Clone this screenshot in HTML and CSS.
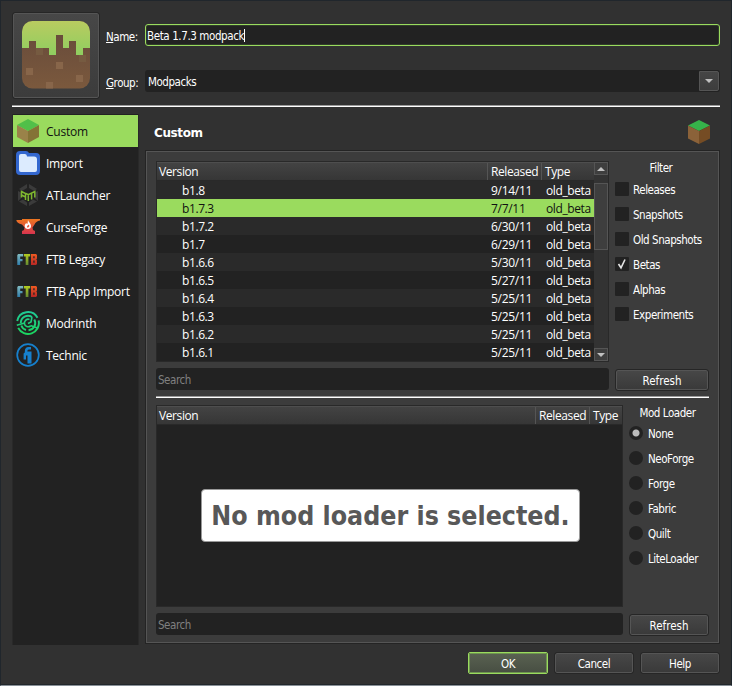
FILE: index.html
```html
<!DOCTYPE html>
<html lang="en">
<head>
<meta charset="utf-8">
<title>New Instance</title>
<link rel="stylesheet" href="styles.css">
</head>
<body>
<svg class="defs" width="0" height="0">
  <defs>
    <linearGradient id="ftbF" gradientUnits="userSpaceOnUse" x1="0" y1="7" x2="0" y2="18"><stop offset="0" stop-color="#83bbc0"/><stop offset="1" stop-color="#2f7eac"/></linearGradient>
    <linearGradient id="ftbT" gradientUnits="userSpaceOnUse" x1="0" y1="7" x2="0" y2="18"><stop offset="0" stop-color="#b3cc20"/><stop offset="1" stop-color="#658931"/></linearGradient>
    <linearGradient id="ftbB" gradientUnits="userSpaceOnUse" x1="0" y1="7" x2="0" y2="18"><stop offset="0" stop-color="#f05a22"/><stop offset="1" stop-color="#b82725"/></linearGradient>
    <linearGradient id="curse" x1="0" y1="0" x2="0" y2="1"><stop offset="0" stop-color="#ed7620"/><stop offset="1" stop-color="#d7344f"/></linearGradient>
    <linearGradient id="modr" gradientUnits="userSpaceOnUse" x1="0" y1="0" x2="0" y2="24"><stop offset="0" stop-color="#20c997"/><stop offset="1" stop-color="#1bd65d"/></linearGradient>
    <linearGradient id="grass" x1="0" y1="0" x2="0" y2="1"><stop offset="0" stop-color="#b9cb60"/><stop offset="1" stop-color="#8fce60"/></linearGradient>
    <linearGradient id="dirt" x1="0" y1="0" x2="0" y2="1"><stop offset=".2" stop-color="#694c3b"/><stop offset="1" stop-color="#7b593d"/></linearGradient>
    <clipPath id="round"><rect width="68" height="67.500" rx="10.500"/></clipPath>
    <g id="ftb">
      <path fill="url(#ftbF)" d="M1.300 8l.9-1h5v2.600H4.200V12H6.500v2.300H4.200V18H1.300z"/>
      <path fill="url(#ftbT)" d="M8 7h6.200v2.600h-1.800V18H9.700V9.600H8z"/>
      <path fill="url(#ftbB)" fill-rule="evenodd" d="M15 7h5l1 1v3.600l-.7.900.7.900V17l-1 1h-5zM17.300 9.200v2h1.300v-2zM17.300 13.500v2.300h1.300v-2.300z"/>
    </g>
  </defs>
</svg>
<main class="dialog">
  <header class="top">
    <button class="icon-button" aria-label="Icon">
      <svg width="68" height="68" viewBox="0 0 68 68">
        <g clip-path="url(#round)">
          <rect width="68" height="68" fill="url(#dirt)"/>
          <path fill="url(#grass)" d="M0 0H68V27H61V34H54V20H47V27H41V14H34V34H27V27H14V20H7V27H0z"/>
          <path fill="#88664a" d="M34 41h7v7h-7zM4 47h7v7H4zM54 54h7v7h-7zM24 61h7v7h-7z"/>
          <path fill="#765b41" d="M14 27h7v7h-7zM57 34h7v7h-7z"/>
        </g>
      </svg>
    </button>
    <div class="fields">
      <label class="lbl name-l"><u>N</u>ame:</label>
      <div class="name-input"><span class="t-name">Beta 1.7.3 modpack</span><i class="caret"></i></div>
      <label class="lbl group-l"><u>G</u>roup:</label>
      <div class="combo"><span class="t-mod">Modpacks</span><span class="drop"><i class="tri down"></i></span></div>
    </div>
  </header>
  <hr class="rule">
  <section class="middle">
    <nav class="side">
      <div class="item active"><svg width="24" height="24"><path fill="#51bf49" d="M12 0l11 6-11 6L1 6z"/><path fill="#9a8249" d="M1 6l11 6v12L1 18z"/><path fill="#847336" d="M23 6l-11 6v12l11-6z"/></svg><span class="n1">Custom</span></div>
      <div class="item"><svg width="24" height="24"><path fill="#3367cf" d="M4 0h6q2 0 3 2h7q4 0 4 4v14q0 4-4 4H4q-4 0-4-4V4q0-4 4-4z"/><path fill="#dcebfe" d="M5 3h4q2 0 2 2.500h7q3 0 3 3V19q0 2-2 2H5q-2 0-2-2V5q0-2 2-2z"/></svg><span class="n2">Import</span></div>
      <div class="item"><svg width="24" height="24"><path fill="#3b3b3b" d="M11 1v4L6 8 3 6zM13 1v4l5 3 3-2zM2 8l3 1.500v6L2 18zM22 8l-3 1.500v6l3 2.500zM3 18.500l4-2 4 3V23zM21 18.500l-4-2-4 3V23z"/><path fill="none" stroke="#7eb72f" stroke-width="1.500" d="M5.500 14.500V8.500L9.500 10.500V17M5.500 12L9.500 14M10 10.500L12.300 11.700L18.800 8.500V14.500M12.300 11.700V18M15.600 10.500V16.500"/></svg><span class="n3">ATLauncher</span></div>
      <div class="item"><svg width="24" height="24"><path fill="url(#curse)" d="M6 4h18v1.500c-3 .5-4.500 2-5.500 4l-2 3 .5 2.500 2 1v3H6v-3l2-1 .5-2.500L6 9.500C2.500 9 .5 7 .3 5H6z"/><path fill="#fff" d="M12 5c.5 2 3 3.500 3 6 0 1.700-1 3-3 3s-3.300-1.200-3.300-3c0-1.500 1-2 1.300-3l1.300 1C12 7.500 11.700 6 12 5z"/><path fill="#e35538" d="M12.300 9.500l1.200 1.500-1.500 1.800-1.200-.8z"/></svg><span class="n4">CurseForge</span></div>
      <div class="item"><svg width="24" height="24"><use href="#ftb"/></svg><span class="n5">FTB Legacy</span></div>
      <div class="item"><svg width="24" height="24"><use href="#ftb"/></svg><span class="n6">FTB App Import</span></div>
      <div class="item"><svg width="24" height="24" fill="none" stroke="url(#modr)" stroke-width="1.900"><path d="M1.200 10A10.900 10.900 0 0 1 21.500 6.800M22.600 9.500A10.900 10.900 0 0 1 2.200 16.800"/><path d="M4.800 12A7.200 7.200 0 0 1 16 6M18.300 8.500A7.200 7.200 0 0 1 12.500 19.200M10 19A7.200 7.200 0 0 1 5.300 14.500"/><path d="M13.500 8.400A3.800 3.800 0 1 0 14.500 15M.8 14.200L8.500 12M12 12.500L15 11L16 6M14.500 14.500L21.500 17" stroke-width="1.600"/></svg><span class="n7">Modrinth</span></div>
      <div class="item"><svg width="24" height="24"><circle cx="12" cy="12" r="10.800" fill="none" stroke="#1680cd" stroke-width="1.700"/><path fill="#1680cd" d="M8.800 8.500Q8.800 4 12.500 4H15v2.500h-2.200Q11.300 6.500 11.300 8.500H15.500V20.500H11.500V12.500H10V16.500H7.600V10.500L8.800 9.500z"/></svg><span class="n8">Technic</span></div>
    </nav>
    <section class="page">
      <div class="page-head"><h1>Custom</h1>
        <svg width="24" height="24"><path fill="#36b34a" d="M12 0l11 5.500L12 11 1 5.500z"/><path fill="#8b6239" d="M1 5.500L12 11v13L1 18.500z"/><path fill="#754c24" d="M23 5.500L12 11v13l11-5.500z"/></svg>
      </div>
      <div class="frame">
        <div class="upper">
          <div class="left">
            <div class="table t1">
              <div class="grid">
                <div class="row head"><span class="h-v">Version</span><span class="h-r">Released</span><span class="h-t">Type</span></div>
                <div class="row"><span>b1.8</span><span>9/14/11</span><span>old_beta</span></div>
                <div class="row sel"><span>b1.7.3</span><span>7/7/11</span><span>old_beta</span></div>
                <div class="row"><span>b1.7.2</span><span>6/30/11</span><span>old_beta</span></div>
                <div class="row"><span>b1.7</span><span>6/29/11</span><span>old_beta</span></div>
                <div class="row"><span>b1.6.6</span><span>5/30/11</span><span>old_beta</span></div>
                <div class="row"><span>b1.6.5</span><span>5/27/11</span><span>old_beta</span></div>
                <div class="row"><span>b1.6.4</span><span>5/25/11</span><span>old_beta</span></div>
                <div class="row"><span>b1.6.3</span><span>5/25/11</span><span>old_beta</span></div>
                <div class="row"><span>b1.6.2</span><span>5/25/11</span><span>old_beta</span></div>
                <div class="row"><span>b1.6.1</span><span>5/25/11</span><span>old_beta</span></div>
              </div>
              <div class="scroll"><span class="sb"><i class="tri up"></i></span><span class="thumb"></span><span class="sb end"><i class="tri down"></i></span></div>
            </div>
            <div class="search">Search</div>
          </div>
          <div class="right filter">
            <h2>Filter</h2>
            <label class="opt"><i class="box"></i><span>Releases</span></label>
            <label class="opt"><i class="box"></i><span>Snapshots</span></label>
            <label class="opt"><i class="box"></i><span>Old Snapshots</span></label>
            <label class="opt"><i class="box"><svg width="14" height="14"><path d="M3.500 7l2.500 3.800L10 2.500" fill="none" stroke="#e4e4e4" stroke-width="1.600"/></svg></i><span>Betas</span></label>
            <label class="opt"><i class="box"></i><span>Alphas</span></label>
            <label class="opt"><i class="box"></i><span>Experiments</span></label>
            <button class="btn">Refresh</button>
          </div>
        </div>
        <hr class="rule inner">
        <div class="lower">
          <div class="left">
            <div class="table t2">
              <div class="row head"><span class="h-v">Version</span><span class="h-r">Released</span><span class="h-t">Type</span></div>
              <div class="empty"><div class="notice"><span>No mod loader is selected.</span></div></div>
            </div>
            <div class="search">Search</div>
          </div>
          <div class="right loaders">
            <h2>Mod Loader</h2>
            <label class="opt"><i class="radio on"></i><span>None</span></label>
            <label class="opt"><i class="radio"></i><span>NeoForge</span></label>
            <label class="opt"><i class="radio"></i><span>Forge</span></label>
            <label class="opt"><i class="radio"></i><span>Fabric</span></label>
            <label class="opt"><i class="radio"></i><span>Quilt</span></label>
            <label class="opt"><i class="radio"></i><span>LiteLoader</span></label>
            <button class="btn">Refresh</button>
          </div>
        </div>
      </div>
    </section>
  </section>
  <footer class="buttons">
    <button class="btn ok">OK</button>
    <button class="btn">Cancel</button>
    <button class="btn">Help</button>
  </footer>
</main>
</body>
</html>
```
FILE: styles.css
```css
* { box-sizing: border-box; }
body {
  margin: 0;
  width: 732px;
  height: 686px;
  overflow: hidden;
  background: #313131;
  color: #fff;
  font: 11.5px/14px "DejaVu Sans Condensed", "DejaVu Sans", sans-serif;
  font-stretch: condensed;
  letter-spacing: -0.45px;
  white-space: nowrap;
}
.defs { display: block; position: absolute; }
svg { display: block; flex: none; }
i { display: block; }
button { font: inherit; letter-spacing: inherit; color: inherit; padding: 0; }
.dialog {
  height: 686px;
  padding: 12px 11px 0 11px;
  border: 1px solid #20262c;
  border-bottom: 1px solid #899097;
  box-shadow: inset 0 -1px #22272b;
}
.top { display: flex; height: 92px; }
.icon-button {
  width: 86px;
  height: 85px;
  margin-left: 1px;
  padding-bottom: 1px;
  display: flex;
  align-items: center;
  justify-content: center;
  background: linear-gradient(#474747, #3c3c3c);
  border: 1px solid #555;
  border-radius: 2px;
  outline: 1px solid #262626;
}
.fields {
  display: grid;
  grid-template-columns: 39px 575px;
  grid-template-rows: 22px 22px;
  row-gap: 24px;
  margin: 11px 0 0 7px;
  align-items: center;
}
.lbl { padding-top: 3px; }
.name-input {
  height: 22px;
  display: flex;
  align-items: center;
  padding-left: 1px;
  background: #222;
  border: 1px solid #9adb5e;
  border-radius: 3px;
  box-shadow: inset 0 0 0 1px #303c29;
}
.t-name { padding-top: 2px; letter-spacing: -0.4px; }
.t-mod { padding-top: 2px; }
.caret { width: 1px; height: 13px; background: #fff; }
.combo {
  height: 22px;
  display: flex;
  align-items: center;
  justify-content: space-between;
  padding: 1px 1px 1px 3px;
  background: #222;
  border-radius: 3px;
}
.drop {
  width: 20px;
  height: 20px;
  display: flex;
  align-items: center;
  justify-content: center;
  background: linear-gradient(#464646, #3d3d3d);
  border: 1px solid #555;
  border-radius: 0 2px 2px 0;
}
.tri { width: 0; height: 0; border: 4px solid transparent; }
.tri.down { border-top-color: #c0c0c0; border-bottom: 0; }
.tri.up { border-bottom-color: #c0c0c0; border-top: 0; }
.rule {
  width: 708px;
  height: 2px;
  margin: 0;
  border: 0;
  background: linear-gradient(#999 50%, #fff 50%);
}
.middle { display: flex; gap: 6px; margin-top: 7px; }
.side {
  width: 127px;
  height: 531px;
  padding: 1px 0;
  background: #222;
  border: 0 solid #292929;
  border-width: 0 1px;
}
.item {
  height: 32px;
  display: flex;
  align-items: center;
  padding-left: 3px;
  gap: 6px;
  font: 12px/16px "Open Sans", "Noto Sans", sans-serif;
  letter-spacing: -0.25px;
}
.item span { padding-top: 2px; }
.active { background: #9adb5e; color: #111; }
.page { width: 575px; }
.page-head {
  display: flex;
  justify-content: space-between;
  align-items: center;
  height: 36px;
  padding: 0 9px;
}
h1 {
  margin: 0;
  padding-top: 1px;
  font: bold 12px/16px "DejaVu Sans", sans-serif;
  letter-spacing: -0.4px;
}
.frame {
  height: 494px;
  background: #3c3c3c;
  border: 1px solid #242424;
  box-shadow: inset 0 0 0 1px #555;
  padding: 10px 10px 0;
}
.upper { display: flex; gap: 6px; height: 229px; }
.upper .left { width: 453px; }
.table { background: #222; border: 1px solid #292929; }
.t1 { height: 201px; display: flex; overflow: hidden; }
.grid { width: 437px; }
.row {
  display: grid;
  grid-template-columns: 331px 54px 52px;
  height: 18px;
  align-items: start;
  font: 12px/20px "Open Sans", "Noto Sans", sans-serif;
  letter-spacing: -0.4px;
}
.row span:nth-child(1) { padding-left: 25px; }
.row span:nth-child(2) { padding-left: 3px; letter-spacing: -0.3px; }
.row span:nth-child(3) { padding-left: 4px; }
.row:nth-child(even) { background: #2a2a2a; }
.row.sel { background: #9adb5e; color: #111; }
.row.head {
  height: 19px;
  background: linear-gradient(#434343, #363636);
  border-top: 1px solid #4e4e4e;
  border-bottom: 1px solid #292929;
}
.row.head span { height: 17px; line-height: 18px; border-right: 1px solid #555; }
.row.head span:nth-child(1) { padding-left: 2px; }
.row.head span:nth-child(2) { padding-left: 3px; letter-spacing: -0.4px; }
.row.head span:nth-child(3) { padding-left: 3px; border: 0; }
.scroll { width: 14px; background: #333; display: flex; flex-direction: column; }
.sb, .thumb { background: #3e3e3e; border: 1px solid #555; }
.sb { height: 13px; display: flex; align-items: center; justify-content: center; }
.thumb { height: 67px; margin-top: 8px; }
.end { margin-top: auto; }
.search {
  height: 22px;
  margin-top: 6px;
  padding: 5px 0 0 2px;
  background: #222;
  border-radius: 3px;
  color: #808080;
}
h2 { margin: 0; font: inherit; text-align: center; }
.right { display: flex; flex-direction: column; }
.filter { width: 94px; }
.filter h2 { height: 15px; padding: 0 2px 0 0; }
.opt { display: flex; gap: 4px; height: 25px; align-items: center; }
.opt span { padding-top: 2px; }
.box { width: 14px; height: 14px; background: #222; border-radius: 1px; }
.radio { width: 14px; height: 14px; border-radius: 50%; background: #222; }
.on { background: radial-gradient(circle, #bbb 3px, #222 4px); }
.btn {
  height: 20px;
  padding-top: 1px;
  background: linear-gradient(#474747, #3a3a3a);
  border: 1px solid #555;
  border-radius: 2px;
  outline: 1px solid #262626;
}
.right .btn { letter-spacing: 0; }
.filter .btn { width: 92px; margin: auto 0 0 1px; }
.inner { width: 553px; margin-top: 6px; }
.lower { display: flex; gap: 6px; margin-top: 7px; height: 230px; }
.lower .left { width: 467px; }
.t2 { height: 202px; }
.t2 .row { grid-template-columns: 379px 54px 32px; }
.empty { height: 181px; display: flex; justify-content: center; align-items: center; }
.notice {
  width: 379px;
  height: 53px;
  margin: 0 0 1px 2px;
  display: flex;
  align-items: center;
  justify-content: center;
  background: #fff;
  border: 1px solid #999;
  border-radius: 4px;
  color: #585858;
  font: bold 26.5px/32px "DejaVu Sans Condensed", "DejaVu Sans", sans-serif;
  font-stretch: condensed;
  letter-spacing: 0;
}
.notice span { padding-top: 2px; }
.loaders { width: 80px; }
.loaders h2 { height: 15px; padding: 1px 3px 0 0; }
.loaders .opt { gap: 5px; }
.loaders .opt span { padding-top: 3px; }
.loaders .btn { width: 78px; margin: auto 0 0 1px; }
.buttons { display: flex; justify-content: flex-end; gap: 8px; padding-right: 1px; margin-top: 8px; }
.buttons .btn { width: 78px; padding-top: 2px; }
.buttons .ok {
  background: linear-gradient(#596151, #484f43);
  border-color: #6f9550;
  outline-color: #9adb5e;
  border-radius: 1px;
}
```
